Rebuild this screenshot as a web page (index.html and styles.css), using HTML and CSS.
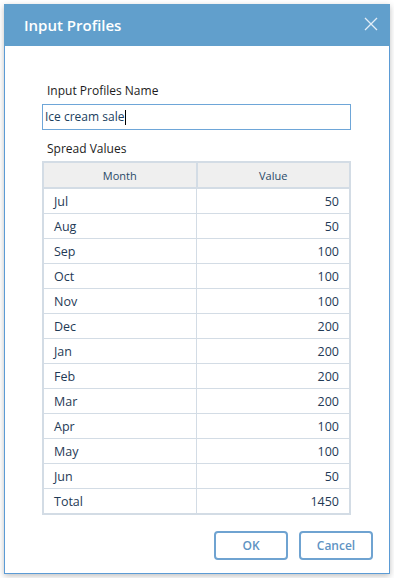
FILE: index.html
```html
<!DOCTYPE html>
<html lang="en">
<head>
  <meta charset="UTF-8" />
  <title>Input Profiles</title>
  <link rel="stylesheet" href="styles.css">
</head>
<body>
  <div class="dialog">
    <div class="dialog-header">
      <span class="dialog-title">Input Profiles</span>
      <svg class="close" width="14" height="14" viewBox="0 0 14 14">
        <path d="M1 1L13 13M13 1L1 13" stroke="#e3eef8" stroke-width="1.3" fill="none"/>
      </svg>
    </div>
    <div class="dialog-body">
      <label class="field-label">Input Profiles Name</label>
      <div class="name-input">Ice cream sale<span class="caret"></span></div>

      <label class="field-label spread">Spread Values</label>
      <table class="spread-table">
        <thead>
          <tr><th>Month</th><th>Value</th></tr>
        </thead>
        <tbody>
          <tr><td>Jul</td><td class="num">50</td></tr>
          <tr><td>Aug</td><td class="num">50</td></tr>
          <tr><td>Sep</td><td class="num">100</td></tr>
          <tr><td>Oct</td><td class="num">100</td></tr>
          <tr><td>Nov</td><td class="num">100</td></tr>
          <tr><td>Dec</td><td class="num">200</td></tr>
          <tr><td>Jan</td><td class="num">200</td></tr>
          <tr><td>Feb</td><td class="num">200</td></tr>
          <tr><td>Mar</td><td class="num">200</td></tr>
          <tr><td>Apr</td><td class="num">100</td></tr>
          <tr><td>May</td><td class="num">100</td></tr>
          <tr><td>Jun</td><td class="num">50</td></tr>
          <tr><td>Total</td><td class="num">1450</td></tr>
        </tbody>
      </table>

      <div class="actions">
        <button type="button">OK</button>
        <button type="button">Cancel</button>
      </div>
    </div>
  </div>
</body>
</html>
```

FILE: styles.css
```css
body {
  margin: 0;
  background: #ffffff;
  font-family: "Open Sans", "Noto Sans", sans-serif;
  color: #1f3a56;
}

.dialog {
  margin: 4px;
  width: 384px;
  height: 569px;
  border: 1px solid #5b9bd5;
  border-top: none;
  background: #ffffff;
  box-shadow: 0 2px 6px rgba(0, 0, 0, 0.25);
  display: flex;
  flex-direction: column;
}

.dialog-header {
  height: 42px;
  background: #619fcc;
  margin: 0 -1px;
  display: flex;
  align-items: center;
  justify-content: space-between;
  padding: 0 12px 0 20px;
}

.dialog-title {
  color: #ffffff;
  font-size: 15px;
  font-weight: 600;
}

.close {
  margin-top: -2px;
}

.dialog-body {
  padding: 37px 38px 0 37px;
  display: flex;
  flex-direction: column;
}

.field-label {
  font-size: 12px;
  color: #1c1c1c;
  padding-left: 5px;
  line-height: 16px;
}

.name-input {
  margin-top: 5px;
  height: 24px;
  border: 1px solid #6ea6d8;
  font-size: 12px;
  line-height: 24px;
  padding-left: 2px;
  color: #20405e;
  display: flex;
  align-items: center;
}

.caret {
  display: inline-block;
  width: 1px;
  height: 15px;
  background: #000;
  margin-left: 1px;
}

.spread {
  margin-top: 11px;
}

.spread-table {
  margin-top: 4px;
  width: 309px;
  border-collapse: collapse;
  border: 2px solid #d3dce5;
  font-size: 12.5px;
}

.spread-table th {
  background: #efefef;
  font-weight: 400;
  font-size: 11px;
  color: #2a4a68;
  height: 24px;
  padding: 0;
  border: 2px solid #d3dce5;
  width: 50%;
}

.spread-table td {
  height: 24px;
  padding: 0 10px;
  border: 1px solid #d3dce5;
  color: #1f3a56;
}

.spread-table td.num {
  text-align: right;
}

.actions {
  margin-top: 16px;
  display: flex;
  justify-content: flex-end;
  gap: 11px;
  margin-right: -22px;
}

.actions button {
  width: 74px;
  height: 29px;
  background: #ffffff;
  border: 2px solid #6fa3d1;
  border-radius: 4px;
  color: #5e93c3;
  font-family: "Open Sans", sans-serif;
  font-size: 12px;
  font-weight: 600;
}
```
